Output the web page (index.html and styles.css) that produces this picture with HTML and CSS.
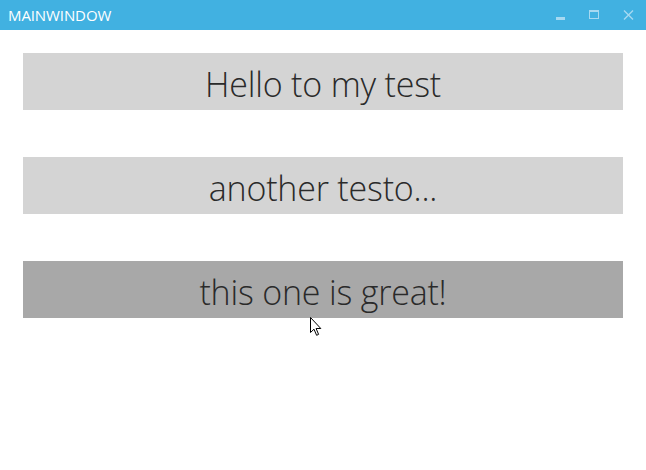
FILE: index.html
```html
<!DOCTYPE html>
<html>
<head>
<meta charset="utf-8">
<link rel="stylesheet" href="styles.css">
</head>
<body>
<div class="window">
  <div class="titlebar">
    <span class="title">MAINWINDOW</span>
    <div class="controls">
      <span class="ctl"><svg width="10" height="10" viewBox="0 0 10 10"><rect x="1" y="7" width="9" height="3" fill="#a6d9f1"/></svg></span>
      <span class="ctl"><svg width="10" height="10" viewBox="0 0 10 10"><rect x="0.5" y="0.5" width="9" height="8" fill="none" stroke="#a6d9f1"/><rect x="0" y="0" width="10" height="2" fill="#a6d9f1"/></svg></span>
      <span class="ctl"><svg width="11" height="10" viewBox="0 0 11 10"><path d="M1 0.5 L10 9.5 M10 0.5 L1 9.5" stroke="#a6d9f1" stroke-width="1.4"/></svg></span>
    </div>
  </div>
  <div class="content">
    <div class="btn">Hello to my test</div>
    <div class="btn">another testo...</div>
    <div class="btn hover">this one is great!</div>
  </div>
  <svg class="cursor" width="13" height="20" viewBox="0 0 13 20"><path d="M0.5 0.5 L0.5 15.5 L4 12.2 L6.6 18.3 L8.6 17.4 L6.1 11.5 L10.8 11.5 Z" fill="#fff" stroke="#000" stroke-width="1" stroke-linejoin="round"/></svg>
</div>
</body>
</html>
```
FILE: styles.css
```css
html, body {
  margin: 0;
  padding: 0;
  background: #fff;
}
.window {
  position: relative;
  width: 646px;
  height: 470px;
  background: #fff;
}
.titlebar {
  height: 30px;
  background: #41b1e1;
  display: flex;
  align-items: center;
  justify-content: space-between;
}
.title {
  color: #fff;
  font-family: "Open Sans", "Noto Sans", sans-serif;
  font-size: 15px;
  padding-left: 8px;
  letter-spacing: -0.1px;
  line-height: 30px;
}
.controls {
  display: flex;
  align-items: center;
  padding-right: 1px;
  height: 30px;
}
.ctl {
  width: 34px;
  display: flex;
  justify-content: center;
  align-items: center;
  height: 30px;
}
.content {
  padding: 23px 23px 0 23px;
  display: flex;
  flex-direction: column;
  gap: 47px;
}
.btn {
  height: 57px;
  box-sizing: border-box;
  padding-top: 5px;
  background: #d4d4d4;
  color: #2a2a2a;
  font-family: "Open Sans", "Noto Sans", sans-serif;
  font-weight: 300;
  font-size: 34px;
  display: flex;
  align-items: center;
  justify-content: center;
  letter-spacing: -0.2px;
}
.btn.hover {
  background: #a8a8a8;
}
.cursor {
  position: absolute;
  left: 310px;
  top: 317px;
}
```
